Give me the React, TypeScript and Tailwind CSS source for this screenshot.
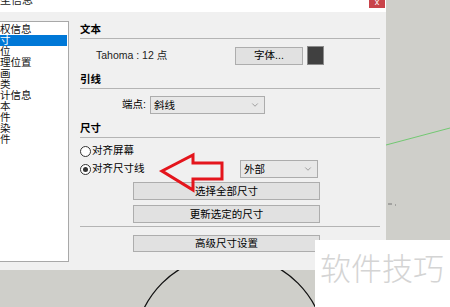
import { ChevronDown } from "lucide-react";

const cjk = "font-['Liberation_Sans','Noto_Sans_CJK_SC',sans-serif]";

const sections = ["权信息", "寸", "位", "理位置", "画", "类", "计信息", "本", "件", "染", "件"];

function Heading({ label }: { label: string }) {
  return (
    <>
      <div className="h-[14px] text-[10.5px] font-bold leading-[14px]">{label}</div>
      <div className="mt-[2px] h-px w-full bg-[#b4b4b4]" />
    </>
  );
}

function Button({ label, className = "" }: { label: string; className?: string }) {
  return (
    <div
      className={`flex items-center justify-center border border-[#adadad] bg-[#e1e1e1] text-[10.5px] leading-none ${className}`}
    >
      {label}
    </div>
  );
}

function Select({ value, className = "" }: { value: string; className?: string }) {
  return (
    <div
      className={`flex items-center justify-between border border-[#acacac] bg-[#e8e8e8] pl-[3px] pr-[4px] text-[10.5px] leading-none ${className}`}
    >
      <span>{value}</span>
      <ChevronDown size={10} strokeWidth={1.2} className="text-[#555]" />
    </div>
  );
}

function Radio({ label, checked }: { label: string; checked?: boolean }) {
  return (
    <div className="flex h-[18px] items-center gap-[1px] text-[10.5px]">
      <span className="flex h-[11px] w-[11px] items-center justify-center rounded-full border border-[#333] bg-white">
        {checked && <span className="h-[5px] w-[5px] rounded-full bg-[#333]" />}
      </span>
      <span>{label}</span>
    </div>
  );
}

export default function App() {
  return (
    <div className={`relative h-[307px] w-[450px] overflow-hidden bg-[#cfcfca] text-black ${cjk}`}>
      <div className="flex h-[270px]">
        {/* dialog */}
        <div className="flex w-[386px] flex-col bg-[#f0f0f0]">
          <div className="flex h-[12px] items-start justify-between overflow-hidden bg-white">
            <span className="-mt-[7px] text-[11px] leading-[14px] text-[#222]">型信息</span>
            <span className="mr-[1px] flex h-[8px] w-[16px] items-start justify-center overflow-hidden bg-[#c9434a] text-[9px] leading-[4px] text-white">
              x
            </span>
          </div>
          <div className="flex pt-[9px]">
            <div className="h-[241px] w-[69px] border-t border-r border-b border-[#a8a8a8] bg-white pt-[2px] text-[10.5px] leading-[11px]">
              {sections.map((s, i) => (
                <div
                  key={i}
                  className={i === 1 ? "mr-[1px] bg-[#0078d7] text-white" : "text-[#111]"}
                >
                  {s}
                </div>
              ))}
            </div>
            <div className="ml-[11px] flex w-[300px] flex-col pt-[1px]">
              <Heading label="文本" />
              <div className="mt-[7px] flex h-[19px] items-center">
                <span className="ml-[16px] text-[10.5px] text-[#222]">Tahoma : 12 点</span>
                <Button label="字体..." className="ml-auto h-[18px] w-[68px]" />
                <div className="ml-[4px] mr-[56px] h-[19px] w-[17px] border border-[#8c8c8c] bg-[#404040]" />
              </div>

              <div className="mt-[7px]">
                <Heading label="引线" />
              </div>
              <div className="mt-[7px] flex h-[18px] items-center">
                <span className="ml-[42px] w-[28px] text-[10.5px]">端点:</span>
                <Select value="斜线" className="h-[18px] w-[115px]" />
              </div>

              <div className="mt-[7px]">
                <Heading label="尺寸" />
              </div>
              <div className="mt-[4px]">
                <Radio label="对齐屏幕" />
              </div>
              <div className="flex items-center">
                <Radio label="对齐尺寸线" checked />
                <Select value="外部" className="ml-auto mr-[62px] h-[18px] w-[78px]" />
              </div>
              <Button label="选择全部尺寸" className="mt-[4px] ml-[53px] h-[18px] w-[187px]" />
              <Button label="更新选定的尺寸" className="mt-[5px] ml-[53px] h-[18px] w-[187px]" />
              <div className="mt-[3px] h-px w-full bg-[#b4b4b4]" />
              <Button label="高级尺寸设置" className="mt-[8px] ml-[53px] h-[17px] w-[187px]" />
            </div>
          </div>
        </div>
        {/* drawing area */}
        <div className="flex-1">
          <svg width="64" height="270" viewBox="0 0 64 270">
            <line x1="0" y1="145" x2="64" y2="128" stroke="#72c872" strokeWidth="1" />
            <line x1="2" y1="204" x2="6" y2="204" stroke="#777" strokeWidth="1" />
            <line x1="9" y1="205" x2="10" y2="205" stroke="#777" strokeWidth="1" />
          </svg>
        </div>
      </div>
      <div className="h-[37px]">
        <svg width="450" height="37" viewBox="0 0 450 37">
          <circle cx="230" cy="81" r="96" fill="none" stroke="#111" strokeWidth="1.3" />
        </svg>
      </div>

      {/* annotation arrow */}
      <svg className="absolute left-0 top-0" width="450" height="307" viewBox="0 0 450 307">
        <polygon
          points="162,171 193,155 193,163 222,163 222,179 193,179 193,190"
          fill="none"
          stroke="#e4151c"
          strokeWidth="3"
        />
      </svg>

      {/* watermark */}
      <div className="absolute left-[315px] top-[240px] flex h-[67px] w-[135px] items-start bg-white pl-[5px] pt-[9px]">
        <span className="font-['Noto_Sans_CJK_SC',sans-serif] text-[31px] font-light leading-[36px] tracking-[0px] text-[#d4d4d4]">
          软件技巧
        </span>
      </div>
    </div>
  );
}
